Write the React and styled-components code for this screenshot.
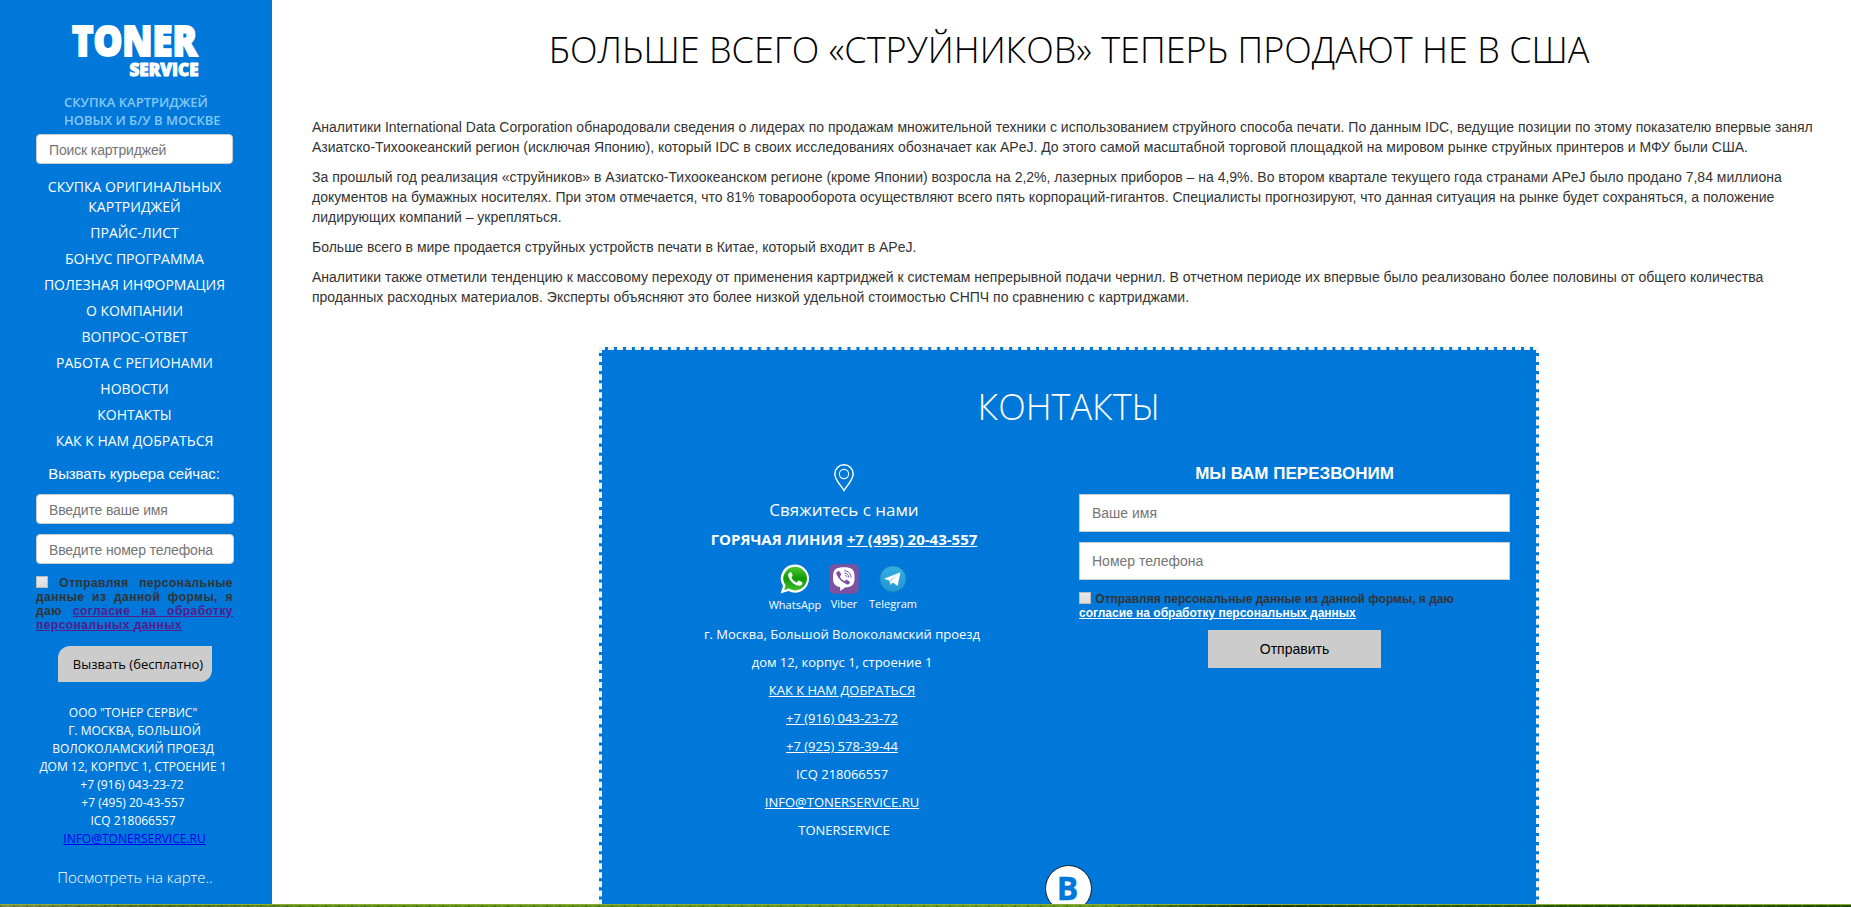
import React from "react";
import styled, { createGlobalStyle } from "styled-components";

const sans = `"Open Sans", "Noto Sans", sans-serif`;
const arial = `"Liberation Sans", Arial, sans-serif`;
const blue = "#0078d9";

const GlobalStyle = createGlobalStyle`
  * { box-sizing: border-box; }
  html, body { margin: 0; padding: 0; height: 100%; overflow: hidden; background: #fff; }
  h1, h2, h3, p { margin: 0; font-weight: normal; }
`;

const Page = styled.div`
  height: 907px;
  display: flex;
  flex-direction: column;
  overflow: hidden;
  font-family: ${arial};
  color: #333;
`;

const Columns = styled.div`
  display: flex;
  height: 904px;
  flex: none;
  overflow: hidden;
`;

const Sidebar = styled.aside`
  width: 272px;
  flex: none;
  background: ${blue};
  color: #fff;
  display: flex;
  flex-direction: column;
  padding: 0 38px 0 36px;
`;

const Logo = styled.svg`
  display: block;
  flex: none;
  margin-left: 30px;
  overflow: visible;
`;

const Slogan = styled.p`
  font: 600 13px/18px ${sans};
  color: #85c8fb;
  margin: 9px 0 5px 28px;
  white-space: nowrap;
`;

const SideInput = styled.input`
  display: block;
  width: ${(p) => p.$w || 198}px;
  height: 30px;
  flex: none;
  margin: 0 0 ${(p) => p.$gap ?? 10}px;
  padding: 2px 12px 0;
  border: 1px solid #ccc;
  border-radius: 4px;
  background: #fff;
  font: 14px ${arial};
  letter-spacing: -0.14px;
  &::placeholder { color: #757575; }
`;

const Menu = styled.nav`
  display: flex;
  flex-direction: column;
  align-items: center;
  gap: 6px;
  margin: 0 -19px 0 -20px;
  padding-top: 13px;
`;

const MenuLink = styled.a`
  font: 14px/20px ${sans};
  text-align: center;
  white-space: pre-line;
  color: #fff;
`;

const CallTitle = styled.p`
  font: 15px/20px ${arial};
  letter-spacing: -0.1px;
  text-align: center;
  white-space: nowrap;
  margin: 13px 2px 10px 0;
`;

const Consent = styled.label`
  display: block;
  width: ${(p) => p.$w}px;
  margin-top: ${(p) => p.$top}px;
  font: bold 12px/14px ${arial};
  letter-spacing: ${(p) => p.$ls || 0};
  text-align: ${(p) => (p.$justify ? "justify" : "left")};
  color: #333;
`;

const Check = styled.input.attrs({ type: "checkbox" })`
  appearance: none;
  width: 12px;
  height: 12px;
  margin: 0 1px 0 0;
  vertical-align: -1px;
  border: 1px solid #bbb;
  background: linear-gradient(#e9e9e9, #dcdcdc);
`;

const ConsentLink = styled.a`
  color: ${(p) => p.$color};
  text-decoration: underline;
`;

const CallButton = styled.button`
  width: 154px;
  height: 36px;
  flex: none;
  margin: 14px 0 0 22px;
  padding: 0 0 0 6px;
  border: 0;
  border-radius: 12px 0;
  background: #ccc;
  color: #000;
  font: 13px ${sans};
  white-space: nowrap;
`;

const Address = styled.address`
  font: normal 12px/18px ${sans};
  text-align: center;
  white-space: nowrap;
  margin: 22px -11px 0 -12px;
`;

const AddressLine = styled.div`
  padding-right: ${(p) => p.$shift || 0}px;
`;

const MailLink = styled.a`
  color: #0000ee;
  text-decoration: underline;
`;

const MapLink = styled.a`
  font: 300 15px/20px ${sans};
  text-align: center;
  white-space: nowrap;
  margin-top: 19px;
`;

const Main = styled.main`
  flex: 1;
  min-width: 0;
  padding-left: 15px;
  display: flex;
  flex-direction: column;
  align-items: center;
`;

const Heading = styled.h1`
  font: 300 36px/40px ${sans};
  color: ${(p) => p.$color};
  margin-top: ${(p) => p.$top}px;
  text-align: center;
  white-space: nowrap;
`;

const Article = styled.article`
  align-self: stretch;
  margin: 47px 0 0 25px;
  display: flex;
  flex-direction: column;
  gap: 10px;
`;

const Paragraph = styled.p`
  font: 14px/20px ${arial};
  color: #333;
  white-space: pre;
`;

const Panel = styled.section`
  width: 940px;
  height: 640px;
  flex: none;
  margin-top: 40px;
  border: 3px dashed #f1f1f1;
  background: ${blue};
  color: #fff;
  display: flex;
  flex-direction: column;
  align-items: center;
`;

const PanelColumns = styled.div`
  display: flex;
  width: 100%;
  height: 438px;
  flex: none;
`;

const ContactColumn = styled.div`
  width: 484px;
  flex: none;
  padding-top: 37px;
  display: flex;
  flex-direction: column;
  align-items: center;
  white-space: nowrap;
`;

const Pin = styled.svg`
  display: block;
  flex: none;
`;

const Reach = styled.p`
  font: 17px/24px ${sans};
  margin-top: 6px;
`;

const Hotline = styled.p`
  font: bold 15px/24px ${sans};
  margin-top: 5px;
`;

const Underlined = styled.a`
  text-decoration: underline;
`;

const Messengers = styled.div`
  display: flex;
  align-items: flex-start;
  height: 50px;
  margin: 13px 0 6px;
`;

const Messenger = styled.div`
  width: ${(p) => p.$w}px;
  display: flex;
  flex-direction: column;
  align-items: center;
  gap: ${(p) => p.$gap ?? 1}px;
  font: 11px/18px ${sans};
  svg { display: block; }
`;

const ContactLine = styled.p`
  font: 13px/28px ${sans};
  padding-right: ${(p) => p.$shift ?? 4}px;
`;

const CallbackForm = styled.form`
  width: 431px;
  margin-left: -7px;
  padding-top: 37px;
`;

const FormTitle = styled.h3`
  font: bold 17px/20px ${arial};
  text-align: center;
  margin-bottom: 10px;
`;

const FormInput = styled.input`
  display: block;
  width: 431px;
  height: 38px;
  margin: 0 0 10px;
  padding: 0 12px;
  border: 1px solid #ccc;
  background: #fff;
  font: 14px ${arial};
  &::placeholder { color: #757575; }
`;

const SendButton = styled.button`
  display: block;
  width: 173px;
  height: 38px;
  margin: 10px auto 0;
  border: 0;
  background: #ccc;
  color: #000;
  font: 14px ${arial};
`;

const Badge = styled.div`
  width: 47px;
  height: 47px;
  flex: none;
  margin-right: 1px;
  padding-right: 2px;
  border: 1px solid #0a1a2c;
  border-radius: 50%;
  background: #fff;
  color: ${blue};
  font: bold 32px/44px ${sans};
  -webkit-text-stroke: 0.5px ${blue};
  text-align: center;
`;

const Strip = styled.div`
  height: 3px;
  flex: none;
  border-top: 1px solid #8fae2c;
  background:
    repeating-linear-gradient(90deg, rgba(20, 50, 5, 0.25) 0 2px, transparent 2px 7px, rgba(190, 220, 90, 0.15) 7px 9px, transparent 9px 13px),
    linear-gradient(90deg, #7d8a55 0, #4c6a25 160px, #5b8a22 300px, #699a28 1100px, #3a641a 1180px, #17340f 1260px, #2b5a16 1400px, #1f4c12 1851px);
`;

const menu = [
  "СКУПКА ОРИГИНАЛЬНЫХ\nКАРТРИДЖЕЙ",
  "ПРАЙС-ЛИСТ",
  "БОНУС ПРОГРАММА",
  "ПОЛЕЗНАЯ ИНФОРМАЦИЯ",
  "О КОМПАНИИ",
  "ВОПРОС-ОТВЕТ",
  "РАБОТА С РЕГИОНАМИ",
  "НОВОСТИ",
  "КОНТАКТЫ",
  "КАК К НАМ ДОБРАТЬСЯ",
];

const paragraphs = [
  "Аналитики International Data Corporation обнародовали сведения о лидерах по продажам множительной техники с использованием струйного способа печати. По данным IDC, ведущие позиции по этому показателю впервые занял\nАзиатско-Тихоокеанский регион (исключая Японию), который IDC в своих исследованиях обозначает как APeJ. До этого самой масштабной торговой площадкой на мировом рынке струйных принтеров и МФУ были США.",
  "За прошлый год реализация «струйников» в Азиатско-Тихоокеанском регионе (кроме Японии) возросла на 2,2%, лазерных приборов – на 4,9%. Во втором квартале текущего года странами APeJ было продано 7,84 миллиона\nдокументов на бумажных носителях. При этом отмечается, что 81% товарооборота осуществляют всего пять корпораций-гигантов. Специалисты прогнозируют, что данная ситуация на рынке будет сохраняться, а положение\nлидирующих компаний – укрепляться.",
  "Больше всего в мире продается струйных устройств печати в Китае, который входит в APeJ.",
  "Аналитики также отметили тенденцию к массовому переходу от применения картриджей к системам непрерывной подачи чернил. В отчетном периоде их впервые было реализовано более половины от общего количества\nпроданных расходных материалов. Эксперты объясняют это более низкой удельной стоимостью СНПЧ по сравнению с картриджами.",
];

function WhatsAppIcon() {
  return (
    <svg width="30" height="30" viewBox="0 0 30 30">
      <defs>
        <linearGradient id="wa" x1="0" y1="0" x2="0" y2="1">
          <stop offset="0" stopColor="#4fc92f" />
          <stop offset="0.5" stopColor="#0f9a05" />
          <stop offset="1" stopColor="#3fc02a" />
        </linearGradient>
      </defs>
      <path d="M15 .5A14 14 0 0 1 29 14.600A14 14 0 0 1 8.400 27L.6 29.600L3 22A14 14 0 0 1 15 .5Z" fill="#fff" />
      <path d="M15 2.800A11.800 11.800 0 1 1 8.900 24.600L4.100 26L5.600 21.600A11.800 11.800 0 0 1 15 2.800Z" fill="url(#wa)" />
      <path d="M10.200 8.300c-1.600.5-2.300 2.200-1.800 4.100 1.200 4.300 5 8 9.600 9.200 2 .4 3.900-.4 4.300-2.200.1-.6 0-1-.4-1.300l-2.700-1.400c-.5-.2-.9-.1-1.200.3l-.9 1.200c-.3.3-.6.3-1 .1-2-.9-3.500-2.300-4.500-4.200-.2-.4-.1-.7.1-1l.8-1c.2-.3.2-.6.1-.9l-1.200-2.600c-.2-.4-.7-.5-1.200-.3Z" fill="#fff" />
    </svg>
  );
}

function ViberIcon() {
  return (
    <svg width="30" height="30" viewBox="0 0 30 30">
      <rect x=".3" y=".3" width="29.400" height="29.400" rx="5" fill="#7d51a0" />
      <path d="M15 3.200c7.500 0 10.600 1.700 10.600 10.300 0 7.300-2.300 9.500-9.600 9.900L11.200 27v-4C5.800 22 4 19.700 4 13.400 4 4.800 7.400 3.200 15 3.200Z" fill="#fff" />
      <path d="M8.700 7.400c.7-.5 1.300-.4 1.800.2l1.500 2.200c.4.600.3 1.200-.3 1.600-.7.500-.8.900-.5 1.700.7 1.800 1.900 3 3.700 3.700.8.300 1.200.2 1.700-.5.500-.6 1-.7 1.700-.3l2.100 1.500c.6.500.7 1.100.3 1.700-.9 1.300-1.900 1.600-3.200 1C12.600 18 9.200 14.500 7.400 10c-.4-1.100 0-1.900 1.300-2.600Z" fill="#7d51a0" />
      <path d="M15.200 6.800c4 0 6.800 2.700 6.800 6.900M15.600 9.100c2.500.2 4.100 1.800 4.200 4.400M16 11.300c1.200.1 1.800.8 1.900 2" fill="none" stroke="#7d51a0" strokeWidth="1" />
    </svg>
  );
}

function TelegramIcon() {
  return (
    <svg width="28" height="30" viewBox="0 0 28 30">
      <defs>
        <linearGradient id="tg" x1="0" y1="0" x2="0" y2="1">
          <stop offset="0" stopColor="#37aee2" />
          <stop offset="1" stopColor="#1e96d4" />
        </linearGradient>
      </defs>
      <circle cx="14" cy="15" r="13.300" fill="url(#tg)" stroke="#1672b4" strokeWidth=".8" />
      <path d="M5 14.800 21.400 8.300 18.700 22 13.800 18.600 11.400 21 10.300 16.500Z" fill="#fff" />
      <path d="M10.300 16.500 19 10.600 12.300 17.500 11.400 21Z" fill="#bcd9ee" />
    </svg>
  );
}

export default function App() {
  return (
    <Page>
      <GlobalStyle />
      <Columns>
        <Sidebar>
          <Logo width="140" height="84" viewBox="0 0 140 84">
            <g fill="#fff" stroke="#fff" fontFamily="Open Sans" fontWeight="800">
              <text x="6" y="56" fontSize="43" strokeWidth="2" textLength="125" lengthAdjust="spacingAndGlyphs">TONER</text>
              <text x="63.500" y="76" fontSize="18" strokeWidth="1" textLength="69" lengthAdjust="spacingAndGlyphs">SERVICE</text>
            </g>
          </Logo>
          <Slogan>
            СКУПКА КАРТРИДЖЕЙ
            <br />
            НОВЫХ И Б/У В МОСКВЕ
          </Slogan>
          <SideInput placeholder="Поиск картриджей" $w={197} $gap={0} />
          <Menu>
            {menu.map((m) => (
              <MenuLink key={m}>{m}</MenuLink>
            ))}
          </Menu>
          <CallTitle>Вызвать курьера сейчас:</CallTitle>
          <SideInput placeholder="Введите ваше имя" />
          <SideInput placeholder="Введите номер телефона" />
          <Consent $w={197} $top={2} $ls="0.46px" $justify>
            <Check /> Отправляя персональные данные из данной формы, я даю{" "}
            <ConsentLink $color="#551a8b">согласие на обработку персональных данных</ConsentLink>
          </Consent>
          <CallButton>Вызвать (бесплатно)</CallButton>
          <Address>
            <AddressLine $shift={3}>ООО "ТОНЕР СЕРВИС"</AddressLine>
            <AddressLine>Г. МОСКВА, БОЛЬШОЙ</AddressLine>
            <AddressLine $shift={3}>ВОЛОКОЛАМСКИЙ ПРОЕЗД</AddressLine>
            <AddressLine $shift={3}>ДОМ 12, КОРПУС 1, СТРОЕНИЕ 1</AddressLine>
            <AddressLine $shift={5}>+7 (916) 043-23-72</AddressLine>
            <AddressLine $shift={3}>+7 (495) 20-43-557</AddressLine>
            <AddressLine $shift={3}>ICQ 218066557</AddressLine>
            <AddressLine>
              <MailLink>INFO@TONERSERVICE.RU</MailLink>
            </AddressLine>
          </Address>
          <MapLink>Посмотреть на карте..</MapLink>
        </Sidebar>
        <Main>
          <Heading as="h1" $color="#000" $top={30}>
            БОЛЬШЕ ВСЕГО «СТРУЙНИКОВ» ТЕПЕРЬ ПРОДАЮТ НЕ В США
          </Heading>
          <Article>
            {paragraphs.map((t) => (
              <Paragraph key={t}>{t}</Paragraph>
            ))}
          </Article>
          <Panel>
            <Heading as="h2" $color="#fff" $top={37}>
              КОНТАКТЫ
            </Heading>
            <PanelColumns>
              <ContactColumn>
                <Pin width="22" height="28" viewBox="0 0 22 28" fill="none" stroke="#fff">
                  <path d="M11 26.500C8.500 22 1.800 16 1.800 10a9.200 9.200 0 0 1 18.400 0c0 6-6.700 12-9.200 16.500Z" strokeWidth="1.500" />
                  <circle cx="11" cy="10" r="4.600" strokeWidth="1.100" />
                </Pin>
                <Reach>Свяжитесь с нами</Reach>
                <Hotline>
                  ГОРЯЧАЯ ЛИНИЯ <Underlined>+7 (495) 20-43-557</Underlined>
                </Hotline>
                <Messengers>
                  <Messenger $w={53} $gap={2}>
                    <WhatsAppIcon />
                    WhatsApp
                  </Messenger>
                  <Messenger $w={45}>
                    <ViberIcon />
                    Viber
                  </Messenger>
                  <Messenger $w={53}>
                    <TelegramIcon />
                    Telegram
                  </Messenger>
                </Messengers>
                <ContactLine>г. Москва, Большой Волоколамский проезд</ContactLine>
                <ContactLine>дом 12, корпус 1, строение 1</ContactLine>
                <ContactLine><Underlined>КАК К НАМ ДОБРАТЬСЯ</Underlined></ContactLine>
                <ContactLine><Underlined>+7 (916) 043-23-72</Underlined></ContactLine>
                <ContactLine><Underlined>+7 (925) 578-39-44</Underlined></ContactLine>
                <ContactLine>ICQ 218066557</ContactLine>
                <ContactLine><Underlined>INFO@TONERSERVICE.RU</Underlined></ContactLine>
                <ContactLine $shift={0}>TONERSERVICE</ContactLine>
              </ContactColumn>
              <CallbackForm>
                <FormTitle>МЫ ВАМ ПЕРЕЗВОНИМ</FormTitle>
                <FormInput placeholder="Ваше имя" />
                <FormInput placeholder="Номер телефона" />
                <Consent $w={431} $top={12}>
                  <Check /> Отправляя персональные данные из данной формы, я даю
                  <br />
                  <ConsentLink $color="#fff">согласие на обработку персональных данных</ConsentLink>
                </Consent>
                <SendButton type="button">Отправить</SendButton>
              </CallbackForm>
            </PanelColumns>
            <Badge>B</Badge>
          </Panel>
        </Main>
      </Columns>
      <Strip />
    </Page>
  );
}
